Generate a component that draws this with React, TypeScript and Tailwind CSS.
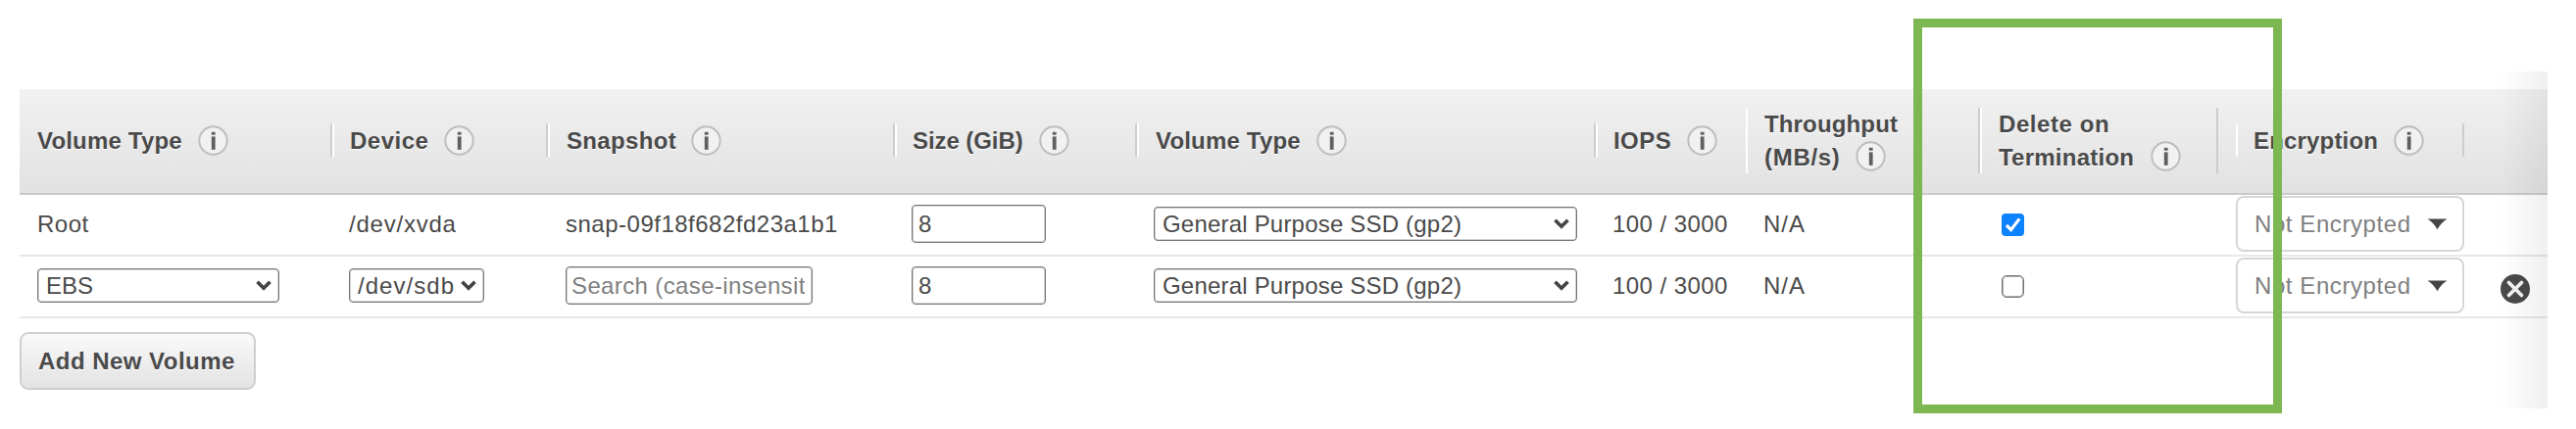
import type { ReactNode } from "react";

function InfoIcon() {
  return (
    <svg width="31" height="31" viewBox="0 0 31 31" className="shrink-0">
      <circle cx="15.5" cy="15.5" r="14.2" fill="#f1f1f1" stroke="#bdbdbd" strokeWidth="1.9" />
      <rect x="13.8" y="6.8" width="3.8" height="2.9" fill="#5f5f5f" />
      <rect x="13.8" y="11.4" width="3.8" height="13.4" fill="#5f5f5f" />
    </svg>
  );
}

function Chevron() {
  return (
    <svg width="16" height="11" viewBox="0 0 16 11" className="shrink-0">
      <path d="M1.5 1.8 L8 8.2 L14.5 1.8" fill="none" stroke="#444" strokeWidth="3.7" />
    </svg>
  );
}

const columns = [
  "w-[319px]",
  "w-[220px]",
  "w-[354px]",
  "w-[247px]",
  "w-[468px]",
  "w-[153px]",
  "w-[239px]",
  "w-[261px]",
  "w-[233px]",
  "w-[85px]",
];

type Heading = { lines: { text: string; cls: string }[]; box: string };

const headings: Heading[] = [
  { lines: [{ text: "Volume Type", cls: "w-[164px] tracking-[0.18px]" }], box: "h-[34px] w-full pl-[18px] border-r-2" },
  { lines: [{ text: "Device", cls: "w-[96px] tracking-[0.5px]" }], box: "h-[34px] w-full pl-[16px] border-x-2" },
  { lines: [{ text: "Snapshot", cls: "w-[127px] tracking-[0.33px]" }], box: "h-[34px] w-full pl-[17px] border-x-2" },
  { lines: [{ text: "Size (GiB)", cls: "w-[129px] tracking-[-0.08px]" }], box: "h-[34px] w-full pl-[16px] border-x-2" },
  { lines: [{ text: "Volume Type", cls: "w-[164px] tracking-[0.18px]" }], box: "h-[34px] w-full pl-[17px] border-x-2" },
  { lines: [{ text: "IOPS", cls: "w-[75px] tracking-[0.45px]" }], box: "h-[34px] w-full pl-[16px] border-l-2" },
  {
    lines: [
      { text: "Throughput", cls: "tracking-[0.15px]" },
      { text: "(MB/s)", cls: "w-[93px] tracking-[0.7px]" },
    ],
    box: "h-[67px] w-full pl-[17px] border-x-2",
  },
  {
    lines: [
      { text: "Delete on", cls: "tracking-[0.57px]" },
      { text: "Termination", cls: "w-[155px] tracking-[0.24px]" },
    ],
    box: "h-[67px] w-[243px] pl-[17px] border-x-2",
  },
  { lines: [{ text: "Encryption", cls: "w-[143px] tracking-[0.18px]" }], box: "h-[34px] w-full pl-[16px] border-x-2" },
];

function HeaderCell({ heading, width }: { heading: Heading; width: string }) {
  return (
    <div className={`${width} flex shrink-0 items-center`}>
      <div className={`${heading.box} flex flex-col justify-center border-l-white border-r-[#cdcdcd]`}>
        {heading.lines.map((line, i) => (
          <div key={line.text} className="flex h-[33.5px] items-center">
            <span
              className={`${line.cls} shrink-0 pt-[1px] leading-[33px] font-bold whitespace-nowrap [text-shadow:0_1px_0_#fff]`}
            >
              {line.text}
            </span>
            {i === heading.lines.length - 1 && <InfoIcon />}
          </div>
        ))}
      </div>
    </div>
  );
}

const control = "flex shrink-0 items-center rounded-[4px] border border-[#757575] bg-white inset-shadow-[0_0_0_1px_#d0d0d0]";

function Select({ size, children }: { size: string; children: ReactNode }) {
  return (
    <div className={`${control} ${size} h-[35px] justify-between pr-[7px] whitespace-nowrap`}>
      {children}
      <Chevron />
    </div>
  );
}

function SizeInput() {
  return <div className={`${control} h-[39px] w-[137px] pl-[6px]`}>8</div>;
}

function EncryptionSelect() {
  return (
    <div className="flex h-[57px] w-[233px] items-center justify-between rounded-[8px] border-2 border-[#d6d6d6] bg-white pr-[15px] pl-[17px] text-[#7f7f7f]">
      <span className="w-[159px] tracking-[0.58px] whitespace-nowrap">Not Encrypted</span>
      <svg width="21" height="12" viewBox="0 0 21 12" className="shrink-0">
        <path d="M0.5 0.5 H20.5 Q14.5 4 10.5 11.3 Q6.5 4 0.5 0.5 Z" fill="#444" />
      </svg>
    </div>
  );
}

function Checkbox({ checked }: { checked: boolean }) {
  return checked ? (
    <div className="mt-[2px] flex size-[23px] items-center justify-center rounded-[4px] bg-[#0d82ff]">
      <svg width="23" height="23" viewBox="0 0 23 23">
        <path d="M5 12 L9.6 16.6 L18.2 5.4" fill="none" stroke="#fff" strokeWidth="3.2" />
      </svg>
    </div>
  ) : (
    <div className="mt-[2px] size-[23px] rounded-[5px] border border-[#757575] bg-white inset-shadow-[0_0_0_1px_#b0b0b0]" />
  );
}

function Row({ cells }: { cells: { pad: string; node: ReactNode }[] }) {
  return (
    <div className="flex h-[63px] items-stretch border-b-2 border-[#e8e8e8] pb-[2px]">
      {cells.map((cell, i) => (
        <div key={i} className={`${columns[i]} ${cell.pad} flex shrink-0 items-center whitespace-nowrap`}>
          {cell.node}
        </div>
      ))}
    </div>
  );
}

const iops = <span className="tracking-[0.43px]">100 / 3000</span>;
const throughput = <span className="tracking-[1px]">N/A</span>;
const volumeType = (
  <Select size="w-[432px] pl-[8px]">
    <span className="tracking-[0.2px]">General Purpose SSD (gp2)</span>
  </Select>
);

export default function App() {
  return (
    <div className="relative h-[438px] w-[2628px] overflow-hidden bg-white pt-[91px] pl-[20px] font-['Liberation_Sans',Arial,sans-serif] text-[24px] leading-[34px] text-[#4a4a4a]">
      <div className="w-[2579px]">
        <div className="flex h-[108px] items-stretch border-b-2 border-[#cacaca] bg-gradient-to-b from-[#f1f1f1] to-[#e2e2e2] pb-[2px]">
          {headings.map((heading, i) => (
            <HeaderCell key={i} heading={heading} width={columns[i]} />
          ))}
        </div>
        <Row
          cells={[
            { pad: "pl-[18px]", node: <span className="tracking-[0.5px]">Root</span> },
            { pad: "pl-[17px]", node: <span className="tracking-[0.78px]">/dev/xvda</span> },
            { pad: "pl-[18px]", node: <span className="tracking-[0.5px]">snap-09f18f682fd23a1b1</span> },
            { pad: "pl-[17px]", node: <SizeInput /> },
            { pad: "pl-[17px]", node: volumeType },
            { pad: "pl-[17px]", node: iops },
            { pad: "pl-[18px]", node: throughput },
            { pad: "pl-[22px]", node: <Checkbox checked /> },
            { pad: "", node: <EncryptionSelect /> },
            { pad: "", node: null },
          ]}
        />
        <Row
          cells={[
            { pad: "pl-[18px]", node: <Select size="w-[247px] pl-[8px]">EBS</Select> },
            {
              pad: "pl-[17px]",
              node: (
                <Select size="w-[138px] pl-[8px]">
                  <span className="tracking-[1.05px]">/dev/sdb</span>
                </Select>
              ),
            },
            {
              pad: "pl-[18px]",
              node: (
                <div className={`${control} h-[39px] w-[252px] pr-[7px] pl-[5px] text-[#7f7f7f]`}>
                  <span className="w-full overflow-hidden tracking-[0.38px]">Search (case-insensitive)</span>
                </div>
              ),
            },
            { pad: "pl-[17px]", node: <SizeInput /> },
            { pad: "pl-[17px]", node: volumeType },
            { pad: "pl-[17px]", node: iops },
            { pad: "pl-[18px]", node: throughput },
            { pad: "pl-[22px]", node: <Checkbox checked={false} /> },
            { pad: "", node: <EncryptionSelect /> },
            {
              pad: "pl-[36px] pt-[6px]",
              node: (
                <svg width="32" height="32" viewBox="0 0 32 32">
                  <circle cx="16" cy="16" r="15" fill="#4a4a4a" />
                  <path d="M9.5 9.5 L22.5 22.5 M22.5 9.5 L9.5 22.5" stroke="#f4f4f4" strokeWidth="3.8" strokeLinecap="round" />
                </svg>
              ),
            },
          ]}
        />
        <button className="mt-[14px] flex h-[59px] w-[241px] items-center rounded-[9px] border-2 border-[#cfcfcf] bg-gradient-to-b from-[#fafafa] to-[#e3e3e3] pl-[17px] font-bold tracking-[0.47px] whitespace-nowrap [text-shadow:0_1px_0_#fff]">
          Add New Volume
        </button>
      </div>
      <div className="absolute top-[73px] left-[2549px] h-[344px] w-[50px] bg-gradient-to-r from-transparent to-black/6" />
      <div className="absolute top-[19px] left-[1952px] h-[403px] w-[376px] border-[9px] border-[#7db752]" />
    </div>
  );
}
